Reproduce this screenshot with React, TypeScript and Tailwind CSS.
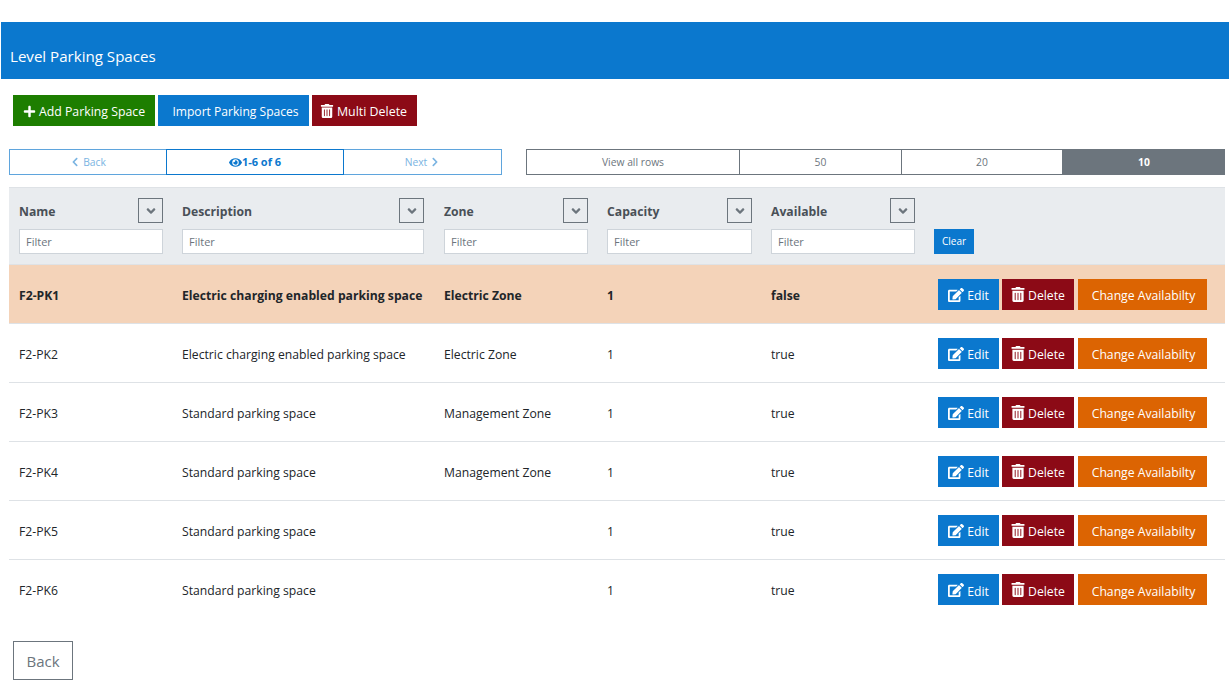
import { FaPlus, FaTrashAlt, FaEdit, FaEye, FaChevronLeft, FaChevronRight, FaAngleDown } from "react-icons/fa";

const rows = [
  { name: "F2-PK1", description: "Electric charging enabled parking space", zone: "Electric Zone", capacity: "1", available: "false" },
  { name: "F2-PK2", description: "Electric charging enabled parking space", zone: "Electric Zone", capacity: "1", available: "true" },
  { name: "F2-PK3", description: "Standard parking space", zone: "Management Zone", capacity: "1", available: "true" },
  { name: "F2-PK4", description: "Standard parking space", zone: "Management Zone", capacity: "1", available: "true" },
  { name: "F2-PK5", description: "Standard parking space", zone: "", capacity: "1", available: "true" },
  { name: "F2-PK6", description: "Standard parking space", zone: "", capacity: "1", available: "true" },
];

const columns = [
  { label: "Name", width: "w-[163px]", filter: "w-[144px]" },
  { label: "Description", width: "w-[262px]", filter: "w-[242px]" },
  { label: "Zone", width: "w-[163px]", filter: "w-[144px]" },
  { label: "Capacity", width: "w-[164px]", filter: "w-[145px]" },
  { label: "Available", width: "w-[164px]", filter: "w-[144px]" },
];

function HeaderCell({ label, filter }: { label: string; filter: string }) {
  return (
    <th className="px-[10px] pt-[10px] pb-[8px] text-left align-top font-normal">
      <div className={`${filter} flex h-[25px] items-center justify-between`}>
        <span className="pt-[4px] text-[12.2px] font-bold text-[#495057]">{label}</span>
        <button className="flex h-[25px] w-[25px] items-center justify-center border border-[#6c757d] text-[#6c757d]">
          <FaAngleDown className="h-[14px] w-[14px]" />
        </button>
      </div>
      <input
        placeholder="Filter"
        className={`${filter} mt-[6px] block h-[25px] border border-[#ced4da] bg-white px-[6px] text-[11px] font-normal outline-none placeholder:text-[#6c757d]`}
      />
    </th>
  );
}

export default function App() {
  return (
    <div className="min-h-[698px] bg-white pt-[22px] font-['Open_Sans',sans-serif] text-[#212529]">
      <div className="ml-px flex h-[57px] items-end bg-[#0b78ce] px-[9px] pb-[11px] text-[15.1px] text-white">
        Level Parking Spaces
      </div>

      <div className="mt-4 ml-[13px] flex gap-[3px] text-white">
        <button className="flex h-[31px] w-[142px] items-center justify-center gap-[3px] bg-[#1d7e00] pt-[3px] text-[12.3px]">
          <FaPlus className="-mt-[2px] h-[13px] w-[13px]" /> Add Parking Space
        </button>
        <button className="h-[31px] w-[151px] bg-[#0b78ce] pt-[3px] pl-[4px] text-[12.1px]">Import Parking Spaces</button>
        <button className="flex h-[31px] w-[105px] items-center justify-center gap-[3px] bg-[#8c0a16] pt-[3px] pr-[2px] text-[12.4px]">
          <FaTrashAlt className="-mt-[2px] h-[14px] w-[14px]" /> Multi Delete
        </button>
      </div>

      <div className="mt-[23px] ml-[9px] flex w-[1216px] justify-between text-[10.3px]">
        <div className="flex h-[26px] w-[493px] text-[#0b78ce]">
          <div className="flex w-[157px] items-center justify-center gap-[3px] border border-r-0 border-[#5fa5dd] pt-[2px] text-[#7ab4e2]">
            <FaChevronLeft className="-mt-[2px] h-[10px] w-[10px]" /> Back
          </div>
          <div className="flex w-[178px] items-center justify-center border border-[#0b78ce] text-[11px] font-bold">
            <FaEye className="h-[13px] w-[13px]" />
            1-6 of 6
          </div>
          <div className="flex w-[158px] items-center justify-center gap-[3px] border border-l-0 border-[#5fa5dd] pt-[2px] text-[#7ab4e2]">
            Next <FaChevronRight className="-mt-[2px] h-[10px] w-[10px]" />
          </div>
        </div>
        <div className="flex h-[26px] w-[699px] text-[#6c757d]">
          <div className="flex w-[214px] items-center justify-center border border-[#6c757d] pt-[2px]">View all rows</div>
          <div className="flex w-[162px] items-center justify-center border border-l-0 border-[#6c757d] pt-[2px]">50</div>
          <div className="flex w-[161px] items-center justify-center border border-l-0 border-[#6c757d] pt-[2px]">20</div>
          <div className="flex w-[162px] items-center justify-center bg-[#6c757d] pt-[2px] font-bold text-white">10</div>
        </div>
      </div>

      <table className="mt-3 ml-[9px] w-[1216px] table-fixed border-collapse">
        <colgroup>
          {columns.map((c) => (
            <col key={c.label} className={c.width} />
          ))}
          <col className="w-[300px]" />
        </colgroup>
        <thead>
          <tr className="h-[77px] border-y border-[#dee2e6] bg-[#e9ecef]">
            {columns.map((c) => (
              <HeaderCell key={c.label} label={c.label} filter={c.filter} />
            ))}
            <th className="px-[9px] pt-[41px] text-left align-top">
              <button className="block h-[25px] w-[40px] bg-[#0b78ce] text-[10px] font-normal text-white">Clear</button>
            </th>
          </tr>
        </thead>
        <tbody className="text-[12.2px]">
          {rows.map((row, i) => (
            <tr
              key={row.name}
              className={`h-[59px] border-b border-[#dee2e6] last:border-b-0 ${i === 0 ? "bg-[#f4d3b9] font-bold" : ""}`}
            >
              <td className="px-[10px] pt-[4px]">{row.name}</td>
              <td className="truncate px-[10px] pt-[4px]">{row.description}</td>
              <td className="px-[10px] pt-[4px]">{row.zone}</td>
              <td className="px-[10px] pt-[4px]">{row.capacity}</td>
              <td className="px-[10px] pt-[4px]">{row.available}</td>
              <td className="pl-[13px]">
                <div className="flex gap-[3px] text-[12.2px] font-normal text-white">
                  <button className="flex h-[31px] w-[61px] items-center justify-center gap-[3px] bg-[#0b78ce] pt-[5px]">
                    <FaEdit className="-mt-[4px] h-[16px] w-[16px]" /> Edit
                  </button>
                  <button className="flex h-[31px] w-[72px] items-center justify-center gap-[3px] bg-[#8c0a16] pt-[5px]">
                    <FaTrashAlt className="-mt-[4px] h-[15px] w-[14px]" /> Delete
                  </button>
                  <button className="ml-px h-[31px] w-[129px] bg-[#dc6402] pt-[5px] pl-[2px]">Change Availabilty</button>
                </div>
              </td>
            </tr>
          ))}
        </tbody>
      </table>

      <button className="mt-[22px] ml-[13px] block h-[39px] w-[60px] border border-[#6c757d] pt-[2px] text-[15px] text-[#6c757d]">
        Back
      </button>
    </div>
  );
}
